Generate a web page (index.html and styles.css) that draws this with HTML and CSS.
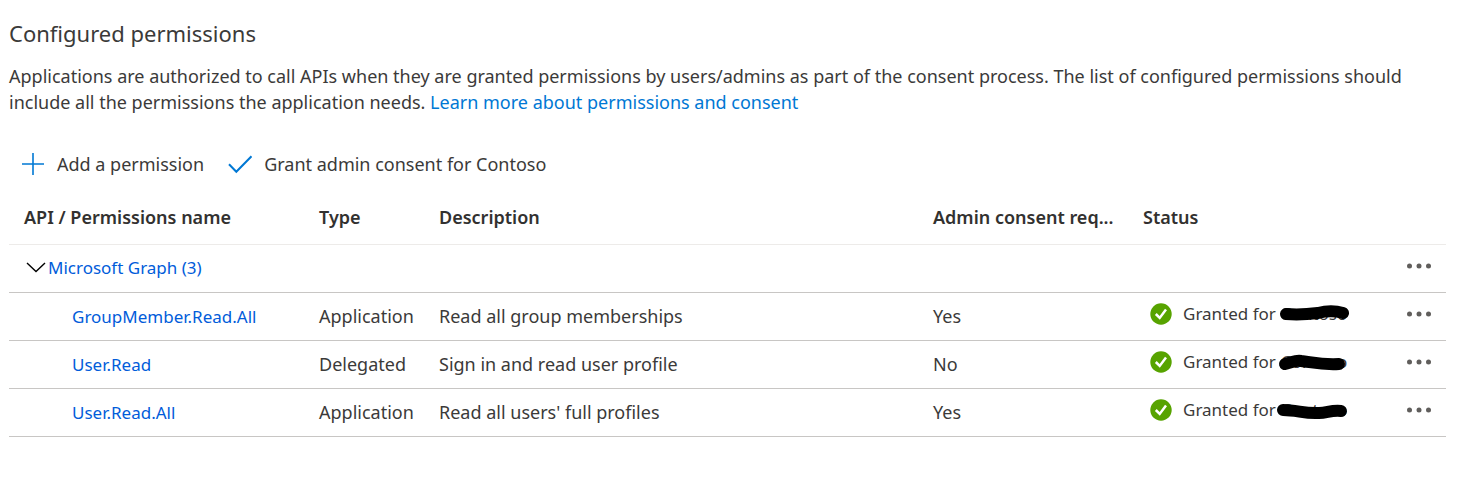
FILE: index.html
```html
<!DOCTYPE html>
<html lang="en">
<head>
<meta charset="utf-8">
<title>Configured permissions</title>
<link rel="stylesheet" href="styles.css">
</head>
<body>
<svg class="sprite" aria-hidden="true">
  <symbol id="dots" viewBox="0 0 26 6"><circle cx="3.5" cy="3" r="2.5"/><circle cx="13" cy="3" r="2.5"/><circle cx="22.5" cy="3" r="2.5"/></symbol>
  <symbol id="granted" viewBox="0 0 22 22"><circle cx="11" cy="11" r="10.7" fill="#57a300"/><path d="M5.8 11 L9.7 14.9 L16 6.6" fill="none" stroke="#fff" stroke-width="2.5"/></symbol>
</svg>
<main class="page">
  <h1 class="title">Configured permissions</h1>
  <p class="intro">Applications are authorized to call APIs when they are granted permissions by users/admins as part of the consent process. The list of configured permissions should include all the permissions the application needs. <a class="learn" href="#">Learn more about permissions and consent</a></p>
  <div class="toolbar">
    <button class="command" type="button"><svg class="command-icon" viewBox="0 0 24 24"><path d="M12 1v22M1 12h22"/></svg>Add a permission</button>
    <button class="command" type="button"><svg class="command-icon check" viewBox="0 0 24 24"><path d="M1 12.3 L8.3 19.8 L23.5 4.3"/></svg>Grant admin consent for Contoso</button>
  </div>
  <table class="permissions">
    <colgroup><col class="col-name"><col class="col-type"><col><col class="col-admin"><col class="col-status"><col class="col-menu"></colgroup>
    <thead>
      <tr><th>API / Permissions name</th><th>Type</th><th>Description</th><th>Admin consent req...</th><th>Status</th><th></th></tr>
    </thead>
    <tbody>
      <tr>
        <td colspan="5" class="group"><div class="group-line"><button class="toggle" type="button" aria-label="Collapse"><svg class="chevron" viewBox="0 0 20 12"><path d="M1 1 L10 9.5 L19 1"/></svg></button><a class="link" href="#">Microsoft Graph (3)</a></div></td>
        <td class="menu"><button class="more" type="button" aria-label="More"><svg class="dots"><use href="#dots"/></svg></button></td>
      </tr>
      <tr>
        <td class="child"><a class="link" href="#">GroupMember.Read.All</a></td><td>Application</td><td>Read all group memberships</td><td>Yes</td>
        <td><div class="status"><svg class="badge"><use href="#granted"/></svg><span>Granted for</span><span class="tenant">Contoso<svg class="marker" viewBox="0 0 74 20"><path d="M10 10 C22 11 34 10 42 9 C50 7 60 7 67 9"/></svg></span></div></td>
        <td class="menu"><button class="more" type="button" aria-label="More"><svg class="dots"><use href="#dots"/></svg></button></td>
      </tr>
      <tr>
        <td class="child"><a class="link" href="#">User.Read</a></td><td>Delegated</td><td>Sign in and read user profile</td><td>No</td>
        <td><div class="status"><svg class="badge"><use href="#granted"/></svg><span>Granted for</span><span class="tenant">Contoso<svg class="marker" viewBox="0 0 74 20"><path d="M9 12 C17 10 20 8 25 9 C35 10 45 13 63 12"/></svg></span></div></td>
        <td class="menu"><button class="more" type="button" aria-label="More"><svg class="dots"><use href="#dots"/></svg></button></td>
      </tr>
      <tr>
        <td class="child"><a class="link" href="#">User.Read.All</a></td><td>Application</td><td>Read all users' full profiles</td><td>Yes</td>
        <td><div class="status"><svg class="badge"><use href="#granted"/></svg><span>Granted for</span><span class="tenant">Contoso<svg class="marker" viewBox="0 0 74 20"><path d="M7 10 C21 10 29 14 43 13 C51 13 55 10 65 11"/></svg></span></div></td>
        <td class="menu"><button class="more" type="button" aria-label="More"><svg class="dots"><use href="#dots"/></svg></button></td>
      </tr>
    </tbody>
  </table>
</main>
</body>
</html>
```
FILE: styles.css
```css
* { box-sizing: border-box; }
body {
  margin: 0;
  background: #fff;
  color: #3b3a39;
  font-family: "Noto Sans", "Open Sans", sans-serif;
  font-size: 18px;
  line-height: 26px;
}
button {
  padding: 0;
  border: 0;
  background: none;
  color: inherit;
  font: inherit;
  cursor: pointer;
}
a { text-decoration: none; }
.sprite { display: none; }
.page { padding: 16px 23px 16px 9px; }
.title {
  margin: 0 0 13px;
  font-size: 22px;
  font-weight: 400;
  line-height: 34px;
}
.intro { margin: 0; }
.learn { color: #0078d4; }
.toolbar {
  display: flex;
  gap: 24px;
  margin-top: 36px;
  padding-left: 12px;
}
.command {
  display: flex;
  align-items: center;
  gap: 12px;
}
.command-icon {
  width: 24px;
  height: 24px;
  fill: none;
  stroke: #0078d4;
  stroke-width: 1.6;
}
.check { stroke-width: 2; }
.permissions {
  width: 100%;
  margin-top: 14px;
  border-collapse: collapse;
  table-layout: fixed;
}
.col-name { width: 295px; }
.col-type { width: 120px; }
.col-admin { width: 210px; }
.col-status { width: 262px; }
.col-menu { width: 56px; }
.permissions th {
  height: 53px;
  padding: 0 10px 0 15px;
  border-bottom: 1px solid #edebe9;
  color: #323130;
  font-weight: 600;
  text-align: left;
  white-space: nowrap;
}
.permissions td {
  height: 48px;
  padding: 0 0 0 15px;
  border-bottom: 1px solid #c8c6c4;
  white-space: nowrap;
}
.permissions .child { padding-left: 63px; }
.group-line {
  display: flex;
  align-items: center;
  gap: 2px;
}
.toggle {
  display: flex;
  padding-left: 2px;
}
.chevron {
  width: 20px;
  height: 12px;
  fill: none;
  stroke: #000;
  stroke-width: 1.4;
}
.link {
  color: #015cda;
  font-size: 17px;
}
.status {
  display: flex;
  align-items: center;
  gap: 5px;
  padding: 0 0 4px 7px;
  font-size: 17px;
}
.badge {
  width: 22px;
  height: 22px;
  margin-right: 6px;
}
.tenant { position: relative; }
.marker {
  position: absolute;
  top: 3px;
  left: -5px;
  width: 74px;
  height: 20px;
  fill: none;
  stroke: #000;
  stroke-width: 12;
  stroke-linecap: round;
}
.permissions .menu { padding: 0 14px 4px 0; }
.more {
  display: flex;
  margin-left: auto;
  padding: 8px 0;
}
.dots {
  width: 26px;
  height: 6px;
  fill: #605e5c;
}
```
